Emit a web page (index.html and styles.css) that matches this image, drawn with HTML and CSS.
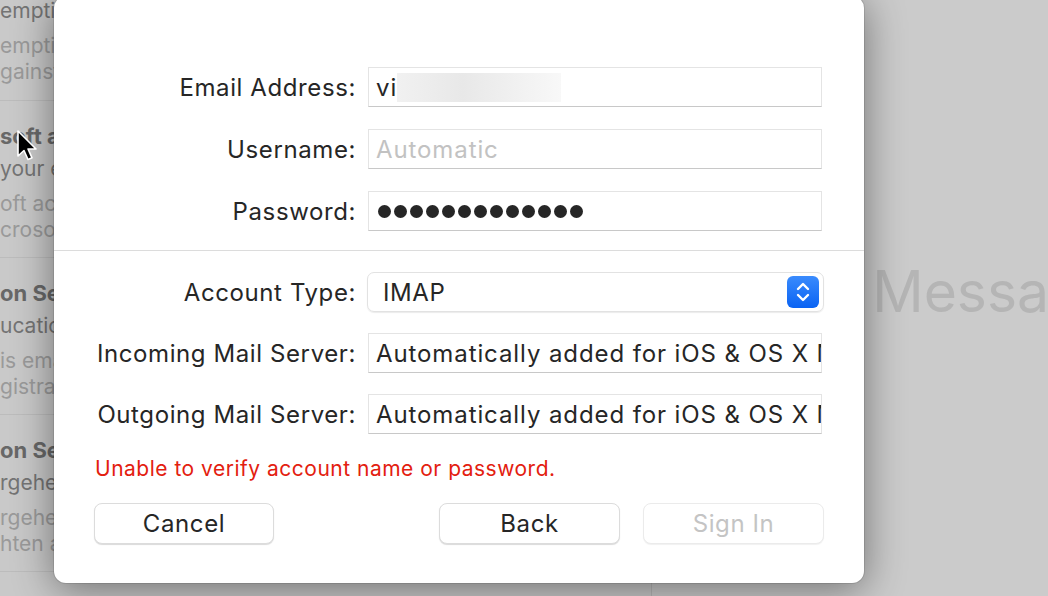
FILE: index.html
```html
<!DOCTYPE html>
<html lang="en">
<head>
    <meta charset="UTF-8">
    <title>Add Account</title>
    <link rel="stylesheet" href="styles.css">
</head>
<body>
    <div class="window">
        <!-- mailbox list behind the sheet -->
        <div class="list">
            <div class="msg first">
                <div class="subject">emptions for Students</div>
                <div class="preview">emption from tuition fees<br>gainst the new policy</div>
            </div>
            <div class="msg">
                <div class="sender">soft account team</div>
                <div class="subject">your email address</div>
                <div class="preview">oft account security<br>crosoft account</div>
            </div>
            <div class="msg">
                <div class="sender">on Services</div>
                <div class="subject">ucation Portal</div>
                <div class="preview">is email was sent<br>gistration</div>
            </div>
            <div class="msg">
                <div class="sender">on Services</div>
                <div class="subject">rgehend bestätigen</div>
                <div class="preview">rgehend bestätigen<br>hten an uns</div>
            </div>
        </div>
        <div class="viewer">
            <div class="empty">No Message Selected</div>
        </div>

        <!-- account sheet -->
        <div class="sheet">
            <div class="fields top">
                <label>Email Address:</label>
                <div class="field"><span>vi</span><span class="blur"></span></div>

                <label>Username:</label>
                <div class="field placeholder">Automatic</div>

                <label>Password:</label>
                <div class="field dots">
                    <i></i><i></i><i></i><i></i><i></i><i></i><i></i><i></i><i></i><i></i><i></i><i></i><i></i>
                </div>
            </div>

            <div class="sep"></div>

            <div class="fields">
                <label>Account Type:</label>
                <div class="popup">
                    <span>IMAP</span>
                    <span class="stepper">
                        <svg width="32" height="32" viewBox="0 0 32 32">
                            <path d="M11 13 L16 8 L21 13 M11 19 L16 24 L21 19" fill="none" stroke="#fff" stroke-width="2.4" stroke-linecap="round" stroke-linejoin="round"/>
                        </svg>
                    </span>
                </div>

                <label>Incoming Mail Server:</label>
                <div class="field">Automatically added for iOS &amp; OS X Mail</div>

                <label>Outgoing Mail Server:</label>
                <div class="field">Automatically added for iOS &amp; OS X Mail</div>
            </div>

            <div class="error">Unable to verify account name or password.</div>

            <div class="actions">
                <button class="cancel">Cancel</button>
                <button>Back</button>
                <button disabled>Sign In</button>
            </div>
        </div>

        <svg class="cursor" width="24" height="36" viewBox="0 0 24 36">
            <path d="M2 2 L2 27 L8 21.5 L12 30.5 L16 28.8 L12 20 L20 20 Z" fill="#000" stroke="#fff" stroke-width="1.6" stroke-linejoin="round"/>
        </svg>
    </div>
</body>
</html>
```

FILE: styles.css
```css
*{
    box-sizing: border-box;
}

body{
    margin: 0;
    font-family: Inter, "Noto Sans", sans-serif;
    color: #262626;
}

.window{
    position: relative;
    width: 1048px;
    height: 596px;
    display: flex;
    overflow: hidden;
    background-color: #cacaca;
}

/* list behind */
.list{
    flex: 0 0 652px;
    border-right: 1px solid #b8b8b8;
    background-color: #c9c9c9;
    white-space: nowrap;
    overflow: hidden;
}

.msg{
    padding: 21px 0 14px 0;
    border-bottom: 1px solid #bcbcbc;
}

.msg.first{
    padding-top: 0;
    padding-bottom: 15px;
}

.sender{
    font-size: 22px;
    line-height: 28px;
    font-weight: bold;
    color: #686868;
}

.subject{
    margin-top: 6px;
    font-size: 21px;
    line-height: 26px;
    color: #747474;
}

.first .subject{
    margin-top: -2px;
}

.preview{
    margin-top: 9px;
    font-size: 21px;
    line-height: 26px;
    color: #9a9a9a;
}

.viewer{
    flex: 1;
    min-width: 0;
    background-color: #cbcbcb;
    padding: 257px 0 0 127px;
    white-space: nowrap;
    overflow: hidden;
}

.empty{
    font-size: 57px;
    line-height: 70px;
    color: #b5b5b5;
}

/* sheet */
.sheet{
    position: absolute;
    left: 54px;
    top: -4px;
    width: 810px;
    height: 587px;
    background-color: #fff;
    border-radius: 12px;
    box-shadow: 0 0 0 1px rgba(0, 0, 0, 0.1), 0 6px 40px rgba(0, 0, 0, 0.45);
}

.fields{
    display: grid;
    grid-template-columns: 302px 454px;
    grid-auto-rows: 40px;
    column-gap: 12px;
    row-gap: 21px;
    align-items: center;
    padding-top: 21px;
}

.fields.top{
    padding-top: 71px;
    row-gap: 22px;
}

label{
    text-align: right;
    font-size: 24px;
    letter-spacing: 0.6px;
}

.field{
    height: 40px;
    display: flex;
    align-items: center;
    padding-left: 7px;
    font-size: 24px;
    letter-spacing: 0.9px;
    white-space: nowrap;
    overflow: hidden;
    border: 1px solid #e4e4e4;
    border-bottom-color: #c8c8c8;
}

.placeholder{
    color: #c2c2c2;
}

.blur{
    display: inline-block;
    width: 164px;
    height: 29px;
    background: linear-gradient(90deg, #f1f1f1, #e8e8e8 40%, #f8f8f8);
}

.dots{
    gap: 3px;
    padding-left: 9px;
}

.dots i{
    width: 13px;
    height: 13px;
    border-radius: 50%;
    background-color: #262626;
}

.sep{
    margin-top: 19px;
    height: 1px;
    background-color: #dcdcdc;
}

.popup{
    height: 40px;
    margin-left: -1px;
    margin-right: -2px;
    display: flex;
    align-items: center;
    justify-content: space-between;
    padding: 0 4px 0 15px;
    font-size: 24px;
    letter-spacing: 0.6px;
    border: 1px solid #e2e2e2;
    border-radius: 7px;
    box-shadow: 0 1px 1px rgba(0, 0, 0, 0.08);
}

.stepper{
    width: 32px;
    height: 32px;
    border-radius: 6px;
    background: linear-gradient(#3a8bfd, #0a63f3);
}

.stepper svg{
    display: block;
}

.error{
    margin-top: 23px;
    padding-left: 41px;
    font-size: 21px;
    letter-spacing: 0.5px;
    line-height: 24px;
    color: #e3200f;
}

.actions{
    display: flex;
    gap: 23px;
    padding: 0 40px;
    margin-top: 22px;
}

button{
    width: 181px;
    height: 41px;
    font-family: inherit;
    font-size: 24px;
    letter-spacing: 0.6px;
    color: #262626;
    background-color: #fff;
    border: 1px solid #dcdcdc;
    border-radius: 8px;
    box-shadow: 0 1px 1px rgba(0, 0, 0, 0.15);
}

.cancel{
    width: 180px;
    margin-right: auto;
}

button:disabled{
    color: #c4c4c4;
    border-color: #ebebeb;
    box-shadow: 0 1px 1px rgba(0, 0, 0, 0.06);
}

.cursor{
    position: absolute;
    left: 16px;
    top: 129px;
}
```
